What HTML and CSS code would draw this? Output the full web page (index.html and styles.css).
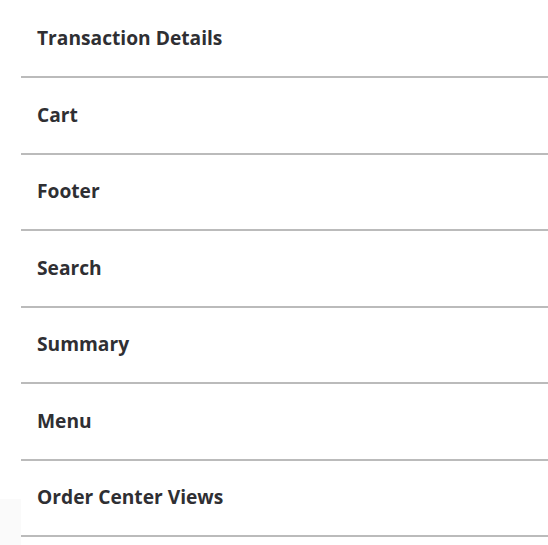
FILE: index.html
```html
<!DOCTYPE html>
<html>
<head>
<meta charset="utf-8">
<link rel="stylesheet" href="styles.css">
</head>
<body>
<div class="page">
  <div class="gutter"><div class="gutter-block"></div></div>
  <ul class="list">
    <li class="item">Transaction Details</li>
    <li class="item">Cart</li>
    <li class="item">Footer</li>
    <li class="item">Search</li>
    <li class="item">Summary</li>
    <li class="item">Menu</li>
    <li class="item">Order Center Views</li>
  </ul>
</div>
</body>
</html>
```
FILE: styles.css
```css
html, body {
  margin: 0;
  padding: 0;
  background: #ffffff;
  height: 545px;
  overflow: hidden;
}
.page {
  display: flex;
  height: 545px;
}
.gutter {
  width: 21px;
  flex: none;
  display: flex;
  flex-direction: column;
}
.gutter-block {
  margin-top: 499px;
  flex: 1;
  background: #fafafa;
}
.list {
  list-style: none;
  margin: 0;
  padding: 1.5px 0 0 0;
  flex: 1;
}
.item {
  box-sizing: border-box;
  height: 76.5px;
  display: flex;
  align-items: center;
  padding: 0 16px 2px 16px;
  border-bottom: 2px solid #bbbbbb;
  font-family: "Open Sans", "Noto Sans", sans-serif;
  font-weight: 700;
  font-size: 19.2px;
  color: #2f2f33;
}
```
